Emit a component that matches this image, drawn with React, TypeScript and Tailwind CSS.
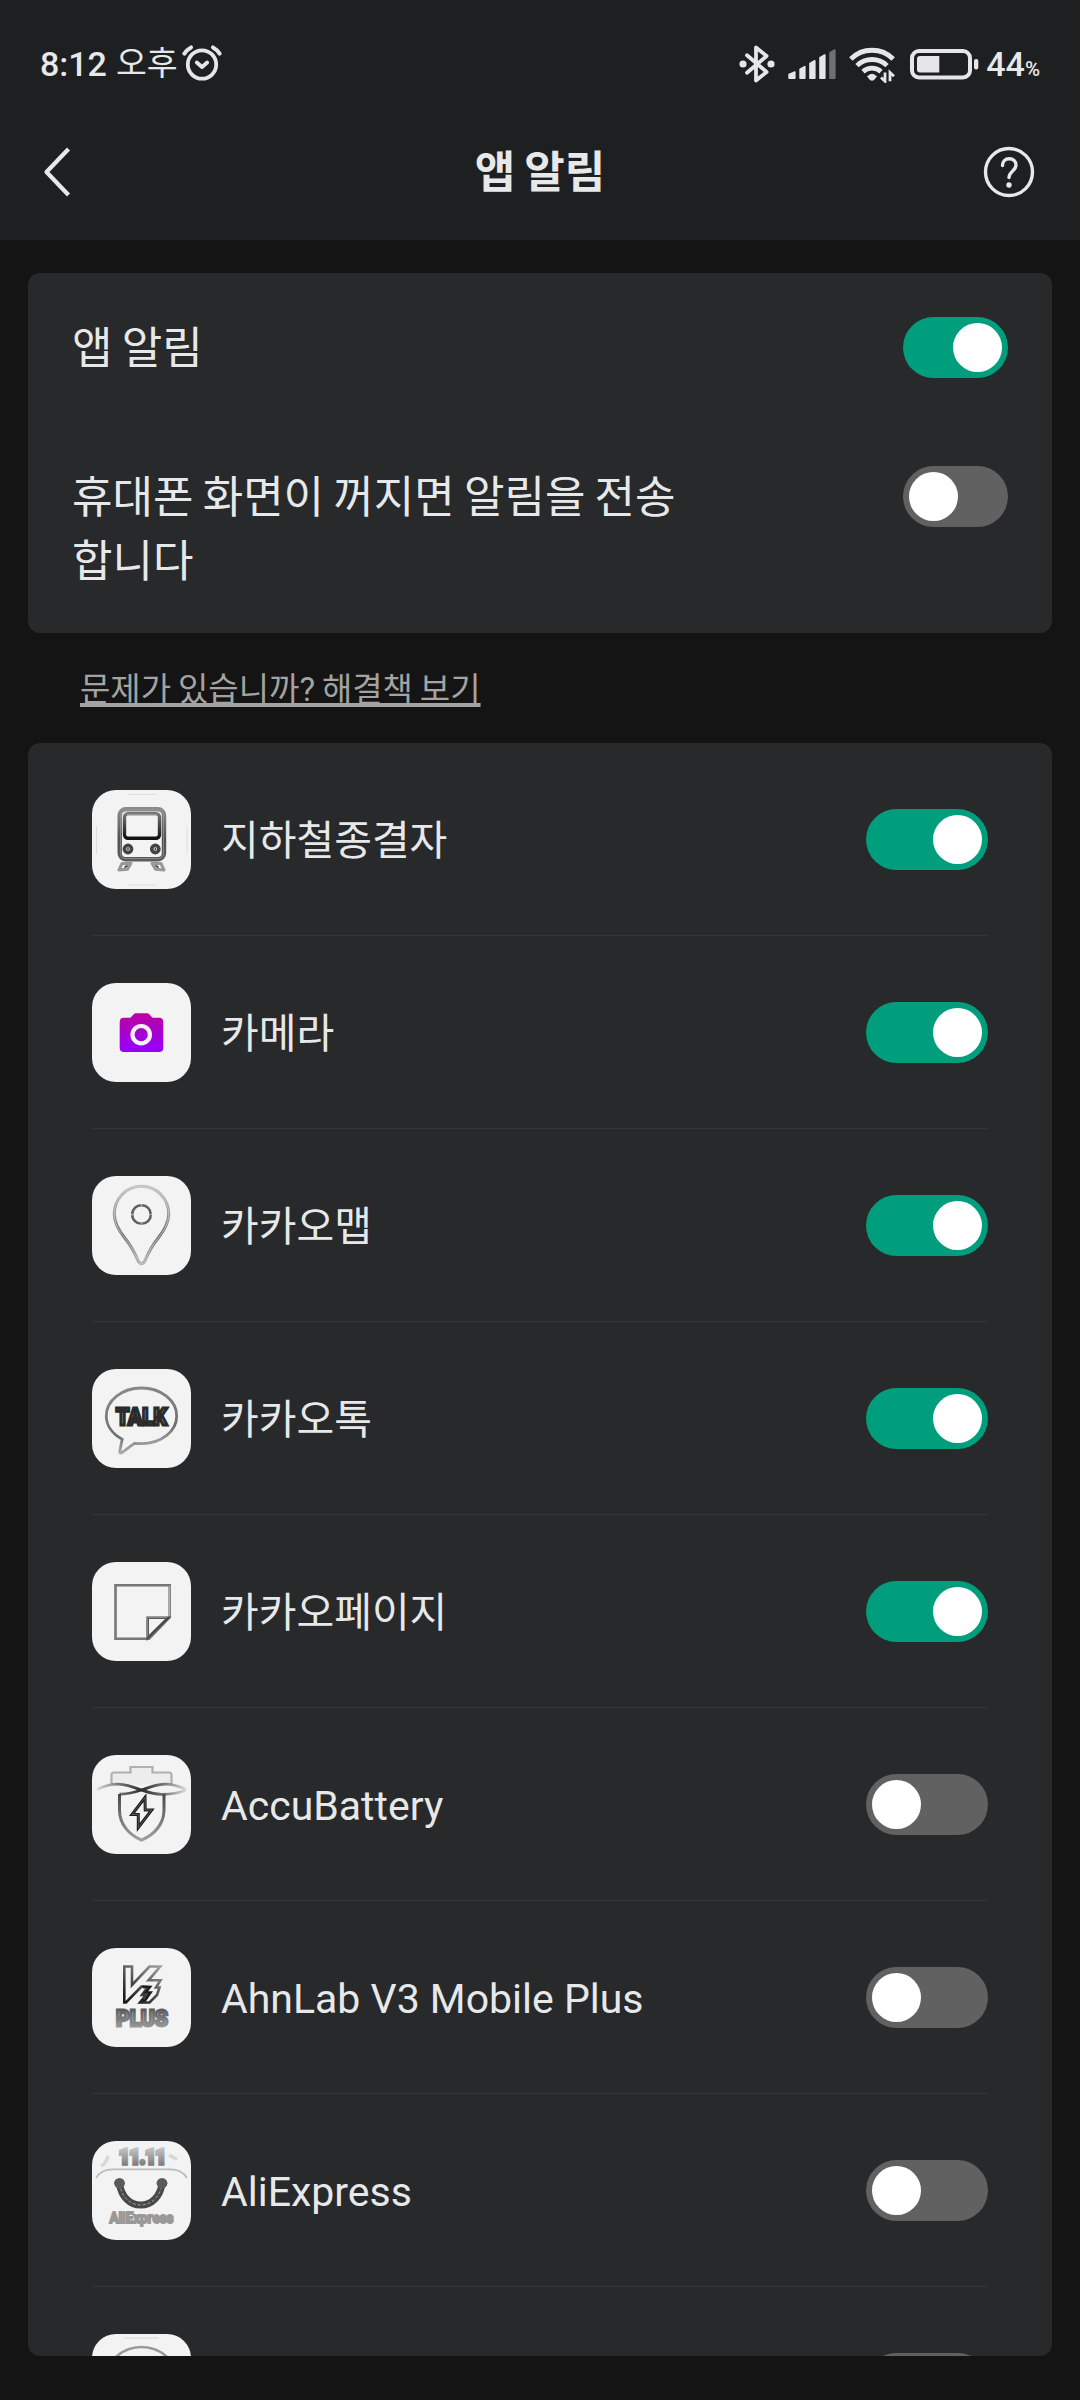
import { useState } from 'react'
import type { ReactNode } from 'react'
import clsx from 'clsx'

interface AppItem {
  id: string
  name: string
  enabled: boolean
  icon: ReactNode
}

function AlarmIcon() {
  return (
    <svg className="h-[40px] w-[40px]" viewBox="0 0 40 40" fill="none" stroke="#e6e6e8" strokeLinecap="round">
      <circle cx="20" cy="21.5" r="14.2" strokeWidth="3.8" />
      <path d="M14.800 19.500 20 24l5.200-4.500" strokeWidth="3.800" strokeLinejoin="round" />
      <path d="M2.400 10.600q2.600-4 6.600-6.200M37.600 10.600q-2.600-4-6.600-6.200" strokeWidth="4" />
    </svg>
  )
}

function BluetoothIcon() {
  return (
    <svg className="h-[40px] w-[36px]" viewBox="0 0 36 40" fill="none" stroke="#e6e6e8">
      <path d="M8 11.200 27.600 28 17 36.500V3.500L27.600 12 8 28.800" strokeWidth="3.800" strokeLinejoin="round" strokeLinecap="round" />
      <circle cx="4" cy="20" r="3.600" fill="#e6e6e8" stroke="none" />
      <circle cx="32" cy="20" r="3.600" fill="#e6e6e8" stroke="none" />
    </svg>
  )
}

function SignalIcon() {
  return (
    <svg className="h-[32px] w-[48px]" viewBox="0 0 48 32" fill="#e6e6e8" stroke="#e6e6e8" strokeWidth="1.600" strokeLinejoin="round">
      <path d="M1.100 26.500 6.800 24v6.200H1.100z" />
      <path d="M12.100 21.200 16.800 18.600v11.600h-4.700z" />
      <path d="M22 15.500 26.800 12.800v17.400H22z" />
      <path d="M32 9.800 36.800 7v23.200H32z" />
      <path d="M42 4.700 46.800 2v28.200H42z" fill="#6f7072" stroke="#6f7072" />
    </svg>
  )
}

function WifiIcon() {
  return (
    <svg className="h-[38px] w-[46px]" viewBox="0 0 46 38" fill="none" stroke="#e6e6e8" strokeWidth="4.800">
      <path d="M1.800 14a30 30 0 0 1 42.400 0" />
      <path d="M8 20.600a21.500 21.500 0 0 1 30 0" />
      <path d="M14 26.600a13.500 13.500 0 0 1 18 0" />
      <path d="M18 31.500q5-5.500 10 0l-3 3.500q-2 1.500-4 0z" fill="#e6e6e8" stroke="none" />
      <path d="M36 27.500v8.700l-4-3.700M41 36.200v-8.700l4 3.700" strokeWidth="2.800" />
    </svg>
  )
}

function BatteryIcon() {
  return (
    <svg className="h-[32px] w-[69px]" viewBox="0 0 69 32" fill="none">
      <rect x="2" y="3" width="58" height="26.500" rx="7" stroke="#e6e6e8" strokeWidth="4" />
      <path d="M10 8h19.300v16.500H10a3 3 0 0 1-3-3V11a3 3 0 0 1 3-3z" fill="#e6e6e8" />
      <rect x="64" y="11" width="4.300" height="10.500" rx="2" fill="#e6e6e8" />
    </svg>
  )
}

function TrainIcon() {
  return (
    <svg viewBox="0 0 99 99" fill="none">
      <defs>
        <linearGradient id="train" x1="0" y1="0" x2="0" y2="1">
          <stop offset="0" stopColor="#8a8a8a" />
          <stop offset=".6" stopColor="#505050" />
          <stop offset="1" stopColor="#5c5c5c" />
        </linearGradient>
        <linearGradient id="glass" x1="0" y1="0" x2="0" y2="1">
          <stop offset="0" stopColor="#777" />
          <stop offset="1" stopColor="#111" />
        </linearGradient>
      </defs>
      <path d="M36 4.500h28M36 95h28M4.500 36v28M95 36v28" stroke="#dedede" strokeWidth="1" />
      <rect x="27.700" y="19.300" width="44.300" height="50" rx="6" stroke="url(#train)" strokeWidth="4.400" />
      <rect x="28.500" y="20" width="43" height="48.500" rx="5" stroke="#a5a5a5" strokeWidth=".6" />
      <rect x="32.500" y="23.800" width="35" height="24.500" rx="3.500" stroke="url(#glass)" strokeWidth="3.400" />
      <path d="M35 25h30" stroke="#ddd" strokeWidth=".7" />
      <circle cx="36" cy="59" r="3.600" stroke="#444" strokeWidth="3.600" />
      <circle cx="63.300" cy="59" r="3.600" stroke="#444" strokeWidth="3.600" />
      <circle cx="36" cy="59" r="1" fill="#444" />
      <circle cx="63.300" cy="59" r="1" fill="#444" />
      <path d="m30 73.500 9-.3-3.500 6-8.500.8zM69 73.500l-9-.3 3.500 6 8.500.8z" stroke="#999" strokeWidth="3" strokeLinejoin="round" />
      <path d="m32.500 77.500 3-2M66.500 77.500l-3-2" stroke="#444" strokeWidth="1.600" />
    </svg>
  )
}

function CameraIcon() {
  return (
    <svg viewBox="0 0 99 99">
      <defs>
        <linearGradient id="camera" x1="0" y1="0" x2="0" y2="1">
          <stop offset="0" stopColor="#bd00a0" />
          <stop offset="1" stopColor="#9400ff" />
        </linearGradient>
      </defs>
      <path
        d="M32 34.700h6.500l3-3.200q1-1.200 2.600-1.200h10.800q1.600 0 2.600 1.200l3 3.200H67q4.300 0 4.300 4.300v25.700q0 4.300-4.300 4.300H32q-4.300 0-4.300-4.300V39q0-4.300 4.300-4.300z"
        fill="url(#camera)"
      />
      <circle cx="49.200" cy="51.700" r="8.700" fill="none" stroke="#f3f3f3" strokeWidth="4.200" />
    </svg>
  )
}

function MapIcon() {
  const pin = 'M49.500 10.300c-15.500 0-27.200 12.500-27.200 27.700 0 9.500 4.500 16.500 10.500 24 6 7.500 9.500 14 12.700 21.500 1.800 5.500 6.200 5.500 8 0 3.200-7.500 6.700-14 12.700-21.500 6-7.500 10.500-14.500 10.500-24 0-15.200-11.700-27.700-27.200-27.700z'
  return (
    <svg viewBox="0 0 99 99" fill="none">
      <defs>
        <linearGradient id="pin" x1="0" y1="0" x2="0" y2="1">
          <stop offset="0" stopColor="#c4c4c4" />
          <stop offset=".65" stopColor="#6c6c6c" />
          <stop offset="1" stopColor="#b0b0b0" />
        </linearGradient>
      </defs>
      <path d={pin} stroke="url(#pin)" strokeWidth="3" />
      <path d={pin} stroke="#d0d0d0" strokeWidth=".8" />
      <circle cx="49.500" cy="38.500" r="9.300" stroke="#606060" strokeWidth="2.600" />
      <circle cx="49.500" cy="38.500" r="9.300" stroke="#b0b0b0" strokeWidth="2.600" strokeDasharray="1.600 13" strokeDashoffset="1" />
    </svg>
  )
}

function TalkIcon() {
  return (
    <svg viewBox="0 0 99 99" fill="none">
      <defs>
        <linearGradient id="bubble" x1="0" y1="0" x2=".2" y2="1">
          <stop offset="0" stopColor="#8a8a8a" />
          <stop offset=".75" stopColor="#707070" />
          <stop offset="1" stopColor="#aaa" />
        </linearGradient>
      </defs>
      <path
        d="M49.500 19c19.500 0 35.200 12.500 35.200 28S69 74.700 49.500 74.700q-4 0-7-.4c-4.500 3-8 6-12.500 9.200-1.500 1-2.500.4-2.200-1.300l2.400-12C20.500 65 14.300 56.500 14.300 47c0-15.500 15.700-28 35.200-28z"
        stroke="url(#bubble)"
        strokeWidth="2.800"
      />
      <text x="24" y="55.500" textLength="51" lengthAdjust="spacingAndGlyphs" fontSize="23.500" fontWeight="900" fill="#777" stroke="#2b2b2b" strokeWidth="3" className="font-['Roboto','Liberation_Sans',sans-serif]">
        TALK
      </text>
    </svg>
  )
}

function PageIcon() {
  return (
    <svg viewBox="0 0 99 99" fill="none">
      <path d="M23.500 23.300h54.200v32L57 76.700H23.500z" stroke="#777" strokeWidth="2.600" />
      <path d="M77.700 24v31" stroke="#ccc" strokeWidth=".8" />
      <path d="M55.700 76V55.700h20.500z" stroke="#4a4a4a" strokeWidth="2.600" />
      <path d="M55.700 75V55.700h19" stroke="#b5b5b5" strokeWidth=".7" />
    </svg>
  )
}

function AccuIcon() {
  return (
    <svg viewBox="0 0 99 99" fill="none">
      <defs>
        <linearGradient id="wave" gradientUnits="userSpaceOnUse" x1="4" y1="0" x2="95" y2="0">
          <stop offset="0" stopColor="#e0e0e0" />
          <stop offset=".25" stopColor="#777" />
          <stop offset=".5" stopColor="#2c2c2c" />
          <stop offset=".75" stopColor="#777" />
          <stop offset="1" stopColor="#e0e0e0" />
        </linearGradient>
        <linearGradient id="shield" x1="0" y1="0" x2="0" y2="1">
          <stop offset="0" stopColor="#484848" />
          <stop offset="1" stopColor="#a0a0a0" />
        </linearGradient>
      </defs>
      <path d="M19.500 29.500V20q0-2.500 2.500-2.500h16.500V12h22v5.500H77q2.500 0 2.500 2.500v9.500" fill="#ededed" stroke="#b0b0b0" strokeWidth="2.200" />
      <path d="M5 34.500c8-4 16-6 24-5.200 8 .8 13 3.200 20.500 5.700 8 2.700 12 4.300 20 4.300 9 .1 17-1 24-4" stroke="url(#wave)" strokeWidth="2.800" />
      <path d="M94 34.500c-8-4-16-6-24-5.200-8 .8-13 3.200-20.500 5.700-8 2.700-14 4.500-22 4" stroke="url(#wave)" strokeWidth="2.800" />
      <path d="M27.500 39V55c0 14 9 24.500 22 30.200C62.500 79.500 72 69 72 55V39" stroke="url(#shield)" strokeWidth="3" />
      <path d="M53 42.500 40 59.500h6.300V72.500L59.700 55h-6.500z" stroke="#1c1c1c" strokeWidth="3" />
      <path d="M53 42.500 40 59.500h6.300V72.500L59.700 55h-6.500z" stroke="#909090" strokeWidth=".5" />
    </svg>
  )
}

function V3Icon() {
  return (
    <svg viewBox="0 0 99 99" fill="none">
      <defs>
        <linearGradient id="v3" x1="1" y1="0" x2=".3" y2="1">
          <stop offset="0" stopColor="#a0a0a0" />
          <stop offset="1" stopColor="#1c1c1c" />
        </linearGradient>
        <linearGradient id="plus" x1="0" y1="0" x2="0" y2="1">
          <stop offset="0" stopColor="#4d4d4d" />
          <stop offset="1" stopColor="#a5a5a5" />
        </linearGradient>
      </defs>
      <path d="M32.300 18.500h7.700v18.500L57.500 18.500h10.700L56.500 32.300h12l-4.500 7.200h3.500l-2.500 7.500-7.500 7.500H48l6-7.500H50l5-7-5.500-1.500L34 54.500h-1.700z" stroke="url(#v3)" strokeWidth="2.600" />
      <path d="m50.500 38.500 7.500.5-4.500 5.500h5L53 52.500h-3.500" stroke="#1c1c1c" strokeWidth="2.600" />
      <text x="24" y="78" textLength="52" lengthAdjust="spacingAndGlyphs" fontSize="22.500" fontWeight="800" fill="#aaa" stroke="url(#plus)" strokeWidth="2.800" className="font-['Roboto','Liberation_Sans',sans-serif]">
        PLUS
      </text>
    </svg>
  )
}

function AliIcon() {
  return (
    <svg viewBox="0 0 99 99" fill="none">
      <defs>
        <linearGradient id="sale" x1="0" y1="0" x2="0" y2="1">
          <stop offset="0" stopColor="#d0d0d0" />
          <stop offset="1" stopColor="#6c6c6c" />
        </linearGradient>
      </defs>
      <path d="M9 25q5-2 7-10M77 14l8 4.500" stroke="#d8d8d8" strokeWidth="3.500" />
      <text x="27" y="23.300" textLength="47" lengthAdjust="spacingAndGlyphs" fontSize="20" fontWeight="900" fill="#999" stroke="url(#sale)" strokeWidth="3.600" className="font-['Roboto','Liberation_Sans',sans-serif]">
        11.11
      </text>
      <path d="M4 37q5-8.700 17-8.700h57q12 0 17 8.700" stroke="#bcbcbc" strokeWidth="1.700" />
      <path d="M27.500 42.500C29 55 37.500 64 48.700 64S68.500 55 70 42.500" stroke="#494949" strokeWidth="7" />
      <path d="M27.500 42.500C29 55 37.500 64 48.700 64S68.500 55 70 42.500" stroke="#aaa" strokeWidth=".9" strokeDasharray="3 2" />
      <circle cx="27.500" cy="42.300" r="5.400" fill="#5a5a5a" />
      <circle cx="70" cy="42.300" r="5.400" fill="#5a5a5a" />
      <text x="17.500" y="82" textLength="64" lengthAdjust="spacingAndGlyphs" fontSize="15.500" fontWeight="700" fill="#b4b4b4" stroke="#999" strokeWidth="1.900" className="font-['Roboto','Liberation_Sans',sans-serif]">
        AliExpress
      </text>
    </svg>
  )
}

function RoundIcon() {
  return (
    <svg viewBox="0 0 99 99" fill="none">
      <path d="M32 4h34" stroke="#d8d8d8" strokeWidth="1" />
      <circle cx="49.500" cy="50.500" r="37.500" stroke="#999" strokeWidth="2.600" />
    </svg>
  )
}

const initialApps: AppItem[] = [
  { id: 'subway', name: '지하철종결자', enabled: true, icon: <TrainIcon /> },
  { id: 'camera', name: '카메라', enabled: true, icon: <CameraIcon /> },
  { id: 'kakaomap', name: '카카오맵', enabled: true, icon: <MapIcon /> },
  { id: 'kakaotalk', name: '카카오톡', enabled: true, icon: <TalkIcon /> },
  { id: 'kakaopage', name: '카카오페이지', enabled: true, icon: <PageIcon /> },
  { id: 'accubattery', name: 'AccuBattery', enabled: false, icon: <AccuIcon /> },
  { id: 'v3', name: 'AhnLab V3 Mobile Plus', enabled: false, icon: <V3Icon /> },
  { id: 'aliexpress', name: 'AliExpress', enabled: false, icon: <AliIcon /> },
  { id: 'more', name: '', enabled: false, icon: <RoundIcon /> },
]

function Toggle({ on, onChange, wide = false }: { on: boolean; onChange: () => void; wide?: boolean }) {
  return (
    <button
      type="button"
      role="switch"
      aria-checked={on}
      onClick={onChange}
      className={clsx(
        'flex h-[61px] shrink-0 items-center rounded-full px-[6px]',
        wide ? 'w-[122px]' : 'w-[105px]',
        on ? 'justify-end bg-[#009e7c]' : 'justify-start bg-[#616161]'
      )}
    >
      <span className="size-[49px] rounded-full bg-white" />
    </button>
  )
}

function StatusBar() {
  return (
    <div className="flex h-[103px] items-center justify-between pt-[24px] pr-[40px] pl-[40px]">
      <div className="flex items-center">
        <span className="text-[34px] leading-none font-medium">8:12</span>
        <span className="ml-[9px] text-[33.500px] leading-none">오후</span>
        <span className="-mt-[1px] ml-[4px]">
          <AlarmIcon />
        </span>
      </div>
      <div className="flex items-center">
        <BluetoothIcon />
        <span className="ml-[13px]">
          <SignalIcon />
        </span>
        <span className="ml-[13px]">
          <WifiIcon />
        </span>
        <span className="ml-[15px]">
          <BatteryIcon />
        </span>
        <span className="ml-[7px] flex items-baseline leading-none font-medium">
          <span className="text-[34px]">44</span>
          <span className="text-[20.500px]">%</span>
        </span>
      </div>
    </div>
  )
}

export default function App() {
  const [notify, setNotify] = useState(true)
  const [screenOff, setScreenOff] = useState(false)
  const [apps, setApps] = useState(initialApps)

  const toggleApp = (id: string) => {
    setApps(apps.map(app => (app.id === id ? { ...app, enabled: !app.enabled } : app)))
  }

  return (
    <div className="flex h-[2400px] w-[1080px] flex-col overflow-hidden bg-[#141414] font-['Roboto','Noto_Sans_CJK_KR',sans-serif] text-[#e7e8ea]">
      <header className="h-[240px] shrink-0 bg-[#1e1f21]">
        <StatusBar />
        <div className="grid h-[137px] grid-cols-[1fr_auto_1fr] items-center pr-[44px] pl-[43px]">
          <button type="button" aria-label="뒤로">
            <svg className="h-[50px] w-[28px]" viewBox="0 0 28 50" fill="none" stroke="#e7e8ea" strokeWidth="4.200">
              <path d="M25.500 2 3.500 25l22 23" strokeLinejoin="round" />
            </svg>
          </button>
          <h1 className="pt-[2px] pl-[1px] text-[44px] leading-none font-bold [word-spacing:-2px]">앱 알림</h1>
          <button type="button" aria-label="도움말" className="justify-self-end">
            <svg className="size-[54px]" viewBox="0 0 54 54" fill="none" stroke="#e7e8ea" strokeWidth="3.400" strokeLinecap="round">
              <circle cx="27" cy="27" r="23.500" />
              <path d="M20.500 20.500c0-4 2.700-6.700 6.700-6.700s6.800 2.600 6.800 6.200c0 5.800-7 6.500-7 12.500" />
              <circle cx="27" cy="40" r="2.700" fill="#e7e8ea" stroke="none" />
            </svg>
          </button>
        </div>
      </header>

      <main className="flex flex-col px-[28px] pt-[33px]">
        <section className="h-[360px] rounded-[12px] bg-[#28292b] px-[44px] pt-[44px]">
          <div className="flex items-start justify-between">
            <p className="text-[44px] leading-[64px] [word-spacing:-1.700px]">앱 알림</p>
            <Toggle on={notify} onChange={() => setNotify(!notify)} />
          </div>
          <div className="mt-[85px] flex items-start justify-between">
            <p className="w-[620px] text-[44px] leading-[64px] break-all [word-spacing:-1.700px]">휴대폰 화면이 꺼지면 알림을 전송합니다</p>
            <Toggle on={screenOff} onChange={() => setScreenOff(!screenOff)} />
          </div>
        </section>

        <div className="flex h-[110px] items-start pt-[36px] pl-[52px]">
          <a href="#" className="text-[33px] leading-[42px] text-[#a3a3a3] underline decoration-[4px] underline-offset-[2px] [text-decoration-skip-ink:none] [word-spacing:-1.300px]">
            문제가 있습니까? 해결책 보기
          </a>
        </div>

        <ul className="h-[1613px] overflow-hidden rounded-[12px] bg-[#28292b] px-[64px]">
          {apps.map(app => (
            <li key={app.id} className="flex h-[193px] items-center border-b border-[#343537]">
              <div className="size-[99px] shrink-0 overflow-hidden rounded-[24px] bg-[#f3f3f3]">{app.icon}</div>
              <span className="ml-[30px] flex-1 pt-[5px] text-[41px] leading-none">{app.name}</span>
              <Toggle wide on={app.enabled} onChange={() => toggleApp(app.id)} />
            </li>
          ))}
        </ul>
      </main>
    </div>
  )
}
